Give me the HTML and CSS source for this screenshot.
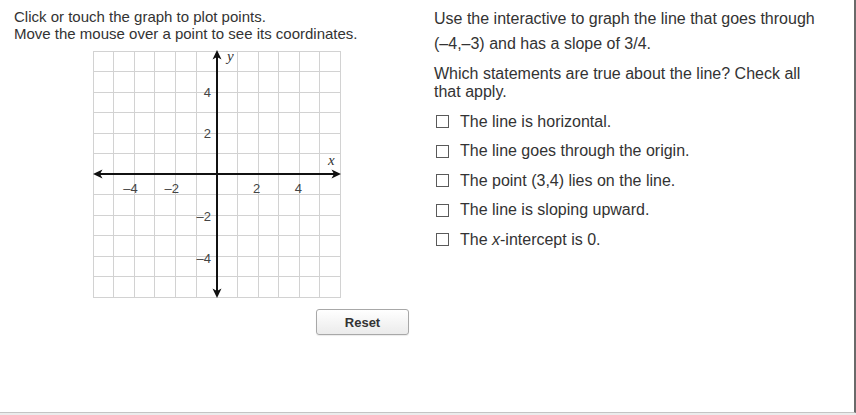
FILE: index.html
```html
<!DOCTYPE html>
<html>
<head>
<meta charset="utf-8">
<link rel="stylesheet" href="styles.css">
</head>
<body>
<div class="page">
  <div class="left">
    <div class="instructions">
      <div>Click or touch the graph to plot points.</div>
      <div>Move the mouse over a point to see its coordinates.</div>
    </div>
    <svg class="graph" width="262" height="258" viewBox="0 0 262 258">
      <g stroke="#d2d2d2" stroke-width="1" fill="none">
        <line x1="5.5" y1="6" x2="5.5" y2="253"/>
        <line x1="25.5" y1="6" x2="25.5" y2="253"/>
        <line x1="46.5" y1="6" x2="46.5" y2="253"/>
        <line x1="66.5" y1="6" x2="66.5" y2="253"/>
        <line x1="87.5" y1="6" x2="87.5" y2="253"/>
        <line x1="108.5" y1="6" x2="108.5" y2="253"/>
        <line x1="149.5" y1="6" x2="149.5" y2="253"/>
        <line x1="170.5" y1="6" x2="170.5" y2="253"/>
        <line x1="190.5" y1="6" x2="190.5" y2="253"/>
        <line x1="211.5" y1="6" x2="211.5" y2="253"/>
        <line x1="231.5" y1="6" x2="231.5" y2="253"/>
        <line x1="252.5" y1="6" x2="252.5" y2="253"/>
        <line x1="5" y1="6.5" x2="253" y2="6.5"/>
        <line x1="5" y1="26.5" x2="253" y2="26.5"/>
        <line x1="5" y1="47.5" x2="253" y2="47.5"/>
        <line x1="5" y1="67.5" x2="253" y2="67.5"/>
        <line x1="5" y1="88.5" x2="253" y2="88.5"/>
        <line x1="5" y1="108.5" x2="253" y2="108.5"/>
        <line x1="5" y1="149.5" x2="253" y2="149.5"/>
        <line x1="5" y1="170.5" x2="253" y2="170.5"/>
        <line x1="5" y1="190.5" x2="253" y2="190.5"/>
        <line x1="5" y1="211.5" x2="253" y2="211.5"/>
        <line x1="5" y1="231.5" x2="253" y2="231.5"/>
        <line x1="5" y1="252.5" x2="253" y2="252.5"/>
      </g>
      <g class="ticks">
        <text x="123" y="51.5" text-anchor="end">4</text>
        <text x="123" y="92.5" text-anchor="end">2</text>
        <text x="123" y="176" text-anchor="end">–2</text>
        <text x="123" y="217.5" text-anchor="end">–4</text>
        <text x="42.5" y="148" text-anchor="middle">–4</text>
        <text x="83.7" y="148" text-anchor="middle">–2</text>
        <text x="168.7" y="148" text-anchor="middle">2</text>
        <text x="210.3" y="148" text-anchor="middle">4</text>
      </g>
      <text class="axis-name" x="139" y="16">y</text>
      <text class="axis-name" x="240" y="119.5">x</text>
      <g stroke="#111" stroke-width="2">
        <line x1="129" y1="9" x2="129" y2="249"/>
        <line x1="9" y1="129" x2="249" y2="129"/>
      </g>
      <g fill="#111">
        <path d="M129 5 L133.5 14.5 L129 12 L124.5 14.5 Z"/>
        <path d="M129 253 L133.5 243.5 L129 246 L124.5 243.5 Z"/>
        <path d="M5 129 L14.5 124.5 L12 129 L14.5 133.5 Z"/>
        <path d="M253 129 L243.5 124.5 L246 129 L243.5 133.5 Z"/>
      </g>
    </svg>
    <button class="reset">Reset</button>
  </div>
  <div class="right">
    <p class="prompt">Use the interactive to graph the line that goes through <span class="nowrap">(–4,–3)</span> and has a slope of 3/4.</p>
    <p class="question">Which statements are true about the line? Check all that apply.</p>
    <ul class="options">
      <li><span class="box"></span><span>The line is horizontal.</span></li>
      <li><span class="box"></span><span>The line goes through the origin.</span></li>
      <li><span class="box"></span><span>The point (3,4) lies on the line.</span></li>
      <li><span class="box"></span><span>The line is sloping upward.</span></li>
      <li><span class="box"></span><span>The <i>x</i>-intercept is 0.</span></li>
    </ul>
  </div>
</div>
</body>
</html>
```
FILE: styles.css
```css
html, body {
  margin: 0;
  padding: 0;
}
body {
  background: #ececec;
  width: 856px;
  height: 415px;
  overflow: hidden;
  font-family: "Liberation Sans", Arial, sans-serif;
  color: #333;
}
.page {
  display: flex;
  width: 854px;
  height: 412px;
  background: #fff;
  border-bottom: 1px solid #c4c4c4;
  border-right: 2px solid #6a6a6a;
}
.left {
  width: 420px;
  padding: 8px 0 0 14px;
  display: flex;
  flex-direction: column;
  align-items: flex-start;
}
.instructions {
  font-size: 15px;
  line-height: 17px;
}
.graph {
  display: block;
  margin: 3px 0 0 74px;
}
.ticks text {
  font-family: "Liberation Sans", Arial, sans-serif;
  font-size: 13px;
  fill: #444;
}
.axis-name {
  font-family: "Liberation Serif", "Times New Roman", serif;
  font-style: italic;
  font-size: 15px;
  fill: #333;
}
.reset {
  margin: 6px 0 0 302px;
  width: 93px;
  height: 26px;
  border: 1px solid #a8a8a8;
  border-radius: 3px;
  background: linear-gradient(#ffffff, #ebebeb);
  box-shadow: 0 1px 1px rgba(0,0,0,0.08);
  font-family: "Liberation Sans", Arial, sans-serif;
  font-weight: bold;
  font-size: 13px;
  color: #333;
  padding: 0;
}
.right {
  flex: 1;
  padding: 6px 0 0 0;
  font-size: 16px;
}
.nowrap {
  white-space: nowrap;
}
.prompt {
  margin: 0;
  line-height: 25px;
  width: 388px;
}
.question {
  margin: 9px 0 0 0;
  line-height: 18px;
  width: 388px;
}
.options {
  list-style: none;
  margin: 6px 0 0 0;
  padding: 0;
}
.options li {
  display: flex;
  align-items: center;
  height: 29.5px;
}
.box {
  display: inline-block;
  box-sizing: border-box;
  width: 13px;
  height: 13px;
  border: 1px solid #5a5a5a;
  background: #fff;
  margin: 0 11px 0 2px;
}
```
